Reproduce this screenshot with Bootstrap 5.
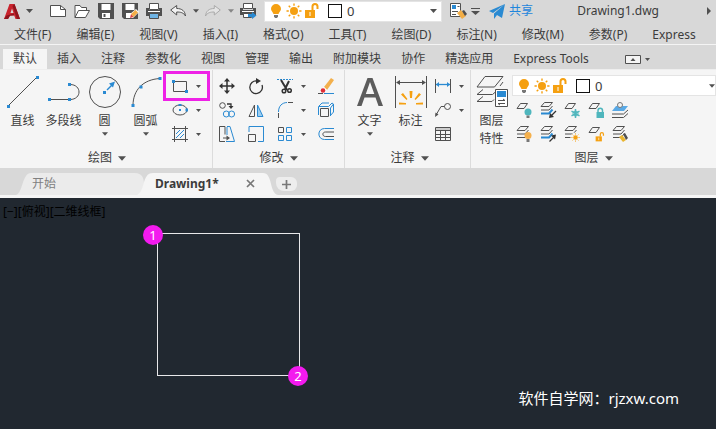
<!DOCTYPE html>
<html lang="zh-CN">
<head>
<meta charset="utf-8">
<meta name="viewport" content="width=device-width, initial-scale=1">
<title>Drawing1.dwg</title>
<link href="https://cdn.jsdelivr.net/npm/bootstrap@5.3.0/dist/css/bootstrap.min.css" rel="stylesheet">
<style>
  body { font: 12px/18px "Noto Sans", "Noto Sans CJK SC", sans-serif; color: #3c3c3c; background: #d8d8d8; }
  button, a { color: inherit; text-decoration: none; white-space: nowrap; }
  button { border: 0; padding: 0; background: none; }
  svg { display: block; flex: none; fill: none; stroke-linecap: butt; overflow: visible; }
  .k { stroke: #505050; }
  .b { stroke: #2a8ad2; }
  .kf { fill: #505050; }
  .bf { fill: #2a8ad2; }
  .of { fill: #f5a011; }
  .title-bar { height: 22px; }
  .tool { width: 24px; height: 22px; display: flex; align-items: center; justify-content: center; flex: none; }
  .first-tool { margin-left: 11px; }
  .drop { width: 11px; height: 22px; display: flex; align-items: center; justify-content: center; flex: none; }
  .combo { height: 21px; background: #fff; border: 1px solid #e4e4e4; padding-left: 2px; }
  .combo-top { width: 178px; }
  .combo-layer { margin-top: 1px; }
  .combo button { width: 18px; display: flex; justify-content: center; }
  .combo select { appearance: none; border: 0; background: none; padding: 0; font-size: 13px; line-height: 18px; color: #3c3c3c; outline: 0; min-width: 0; }
  .swatch { width: 14px; height: 14px; border: 1px solid #111; margin: 0 5px 0 7px; }
  .share { color: #1f86dc; }
  .menu-bar { height: 23px; border-bottom: 1px solid #f4f4f4; padding: 4px 0 0 14px; gap: 25px; }
  .ribbon-tabs { height: 24px; padding: 4px 0 0 3px; }
  .ribbon-tabs button { height: 20px; padding: 0 10px; }
  .ribbon-tabs .current { background: #f5f5f5; }
  .ribbon { background: #f5f5f5; height: 99px; border-top: 1px solid #eee; }
  .panel { border-right: 1px solid #dcdcdc; display: flex; flex-direction: column; padding-top: 4px; flex: none; }
  .panel-draw { width: 213px; padding-left: 2px; }
  .panel-edit { width: 132px; }
  .panel-note { width: 126px; padding-left: 4px; }
  .panel-title { display: flex; align-items: center; justify-content: center; gap: 6px; margin: auto auto 1px; height: 18px; }
  .big { width: 41px; display: flex; flex-direction: column; align-items: center; }
  .big > svg:first-child { margin-bottom: 4px; }
  .big .tri { margin-top: 2px; }
  .small-grid { display: grid; grid-auto-rows: 24px; align-items: center; justify-items: center; align-content: start; }
  .small-grid button { display: flex; }
  .grid-draw { grid-template-columns: 28px 8px; }
  .grid-edit { grid-template-columns: 28px 30px 28px 8px 37px; }
  .grid-note { grid-template-columns: 24px 12px; }
  .grid-layer { grid-template-columns: repeat(5, 24px); padding-top: 2px; }
  .marked { position: relative; }
  .marked::after { content: ""; position: absolute; inset: -7px -22px -7px -9px; border: 3px solid #ee22e6; pointer-events: none; }
  .file-tabs { height: 30px; padding: 4px 0 0 16px; border-bottom: 3px solid #f5f5f5; }
  .file-tab { position: relative; height: 23px; display: flex; align-items: center; z-index: 1; }
  .file-tab > svg.shape { position: absolute; left: 0; top: 0; width: 100%; height: 100%; z-index: -1; }
  .start-tab { width: 128px; padding-left: 16px; color: #808080; z-index: 0; }
  .drawing-tab { width: 142px; margin-left: -8px; padding: 0 23px 0 19px; justify-content: space-between; font-weight: 700; }
  .add-tab { width: 21px; height: 14px; background: #ededed; border-radius: 4px 6px 6px 8px; display: flex; align-items: center; justify-content: center; margin: 5px 0 0 -2px; }
  .drawing-area { background: #212830; position: relative; min-height: 231px; }
  .view-label { color: #000; padding: 5px 3px; }
  .rect-shape { position: absolute; left: 157px; top: 35px; width: 143px; height: 143px; border: 1px solid #e8e8ea; }
  .pin { position: absolute; width: 20px; height: 20px; border-radius: 50%; background: #f31aee; color: #fff; text-align: center; font-size: 13px; line-height: 20px; }
  .pin-start { left: -15px; top: -9px; }
  .pin-end { right: -9px; bottom: -11px; }
  .site { color: #fff; font-size: 15px; line-height: 20px; padding: 0 37px 21px 0; }
</style>
<script src="https://cdn.jsdelivr.net/npm/bootstrap@5.3.0/dist/js/bootstrap.bundle.min.js"></script>
</head>
<body class="d-flex flex-column min-vh-100 overflow-hidden">

<svg width="0" height="0" class="position-absolute" aria-hidden="true">
  <symbol id="tri" viewBox="0 0 7 4"><path class="kf" d="M0 0h7L3.500 4z"/></symbol>
  <symbol id="bulb" viewBox="0 0 14 16"><path class="of" d="M7 1a5 5 0 0 0-5 5c0 2 2 3 2.500 5h5C10 9 12 8 12 6a5 5 0 0 0-5-5z"/><path fill="#777" d="M5 12h4v1.500L8 15H6l-1-1.500z"/></symbol>
  <symbol id="sun" viewBox="0 0 16 16"><circle class="of" cx="8" cy="8" r="4"/><path stroke="#f5a011" stroke-width="1.400" d="M8 .5v2.300M8 13.200v2.300M.5 8h2.300M13.200 8h2.300M2.700 2.700l1.600 1.600M11.700 11.700l1.600 1.600M2.700 13.300l1.600-1.600M11.700 4.300l1.600-1.600"/></symbol>
  <symbol id="unlock" viewBox="0 0 16 16"><path class="of" d="M1 7h10v8H1z"/><path stroke="#f5a011" stroke-width="2" d="M8.500 7V3.500a2.500 2.500 0 0 1 5 0V6"/><path stroke="#fff" d="M6 9v4"/></symbol>
  <symbol id="sheet" viewBox="0 0 16 16"><path class="k" d="M4.500 1.500h7l-3.500 5h-7z"/></symbol>
  <symbol id="stack" viewBox="0 0 16 16"><path class="k" fill="#f5f5f5" d="M4.500.5h8l-3.500 4H1z"/><path class="k" d="M1 8h8l3.500-4M1 11.500h8L12.500 7.500"/></symbol>
  <symbol id="stackblue" viewBox="0 0 16 16"><path class="k" fill="#f5f5f5" d="M4.500.5h8l-3.500 4H1z"/><path class="k" d="M1 8h8l3.500-4"/><path class="b" stroke-width="2" d="M1 11.500h8L12.500 7.500"/></symbol>
</svg>

<header>
  <div class="title-bar d-flex align-items-center">
    <button class="tool" aria-label="应用程序菜单"><svg width="16" height="17" viewBox="0 0 16 17"><path fill="#c9232d" d="M5.500 1h5L16 16h-4.500l-1.300-3.500H6L4 16H0z"/><path fill="#d8d8d8" d="M8 5.500l1.500 4.500H6.500z"/><path fill="#8f151e" d="M10.500 1L16 16h-3L8.500 3zM0 16l2.500-3.500L10 10.500v1.700L6 12.700 4 16z"/></svg></button>
    <button class="drop" aria-label="打开菜单"><svg width="7" height="4"><use href="#tri"/></svg></button>
    <button class="tool first-tool" aria-label="新建"><svg width="16" height="16" viewBox="0 0 16 16"><path class="k" fill="#fff" d="M.5 2.500h10l5 4v7H.5z"/><path class="k" d="M10.500 2.500v4h5"/></svg></button>
    <button class="tool" aria-label="打开"><svg width="16" height="16" viewBox="0 0 16 16"><path class="k" fill="#fff" d="M1 14.500v-12h5l1.500 2h5v3M1 14.500l3.500-7h11l-4 7z"/></svg></button>
    <button class="tool" aria-label="保存"><svg width="16" height="16" viewBox="0 0 16 16"><path class="kf" d="M0 0h16v16H2l-2-2z"/><path fill="#fff" d="M3.500 1h9v6h-9zM4 10h8v5H4z"/><path class="kf" d="M5.500 11h2v3h-2z"/></svg></button>
    <button class="tool" aria-label="另存为"><svg width="16" height="16" viewBox="0 0 16 16"><path class="kf" d="M0 0h16v16H2l-2-2z"/><path fill="#fff" d="M3.500 1h9v6h-9zM4 10h6v5H4z"/><path fill="#fff" d="M7 15l1-4 6-5 3 3-6 6z"/><path fill="#f3ae46" d="M9 11l4.500-4L16 9.500 11.500 14z"/><path fill="#dc4545" d="M8 15l1-4 2.500 3z"/></svg></button>
    <button class="tool" aria-label="打印"><svg width="16" height="16" viewBox="0 0 16 16"><path class="k" fill="#fff" d="M3.500.5h9v6h-9z"/><path class="kf" d="M0 5h3v2h10V5h3v8H0z"/><path class="k" fill="#6fb4e4" d="M3.500 10.500h9v5h-9z"/><path fill="#fff" d="M2 8h12v1H2z"/></svg></button>
    <button class="tool" aria-label="放弃"><svg width="16" height="14" viewBox="0 0 16 14"><path class="k" fill="#f2f2f2" d="M.7 6l6-4.500v3C12 4.500 15 7 15.500 12c-2-3.500-5-4-8.800-4v3z"/></svg></button>
    <button class="drop" aria-label="放弃列表"><svg width="6" height="4"><use href="#tri"/></svg></button>
    <button class="tool" aria-label="重做"><svg width="16" height="14" viewBox="0 0 16 14"><path stroke="#aaa" fill="#e4e4e4" d="M15.300 6l-6-4.500v3C4 4.500 1 7 .5 12c2-3.500 5-4 8.800-4v3z"/></svg></button>
    <button class="drop" aria-label="重做列表"><svg width="6" height="4" opacity=".6"><use href="#tri"/></svg></button>
    <button class="tool" aria-label="批处理打印"><svg width="16" height="16" viewBox="0 0 16 16"><path class="k" fill="#fff" d="M3.500.5h9v5h-9z"/><path class="kf" d="M0 5h3v2h10V5h3v7H0z"/><path fill="#fff" d="M2 8h12v1H2z"/><path class="k" fill="#fff" d="M3.500 10.500h8v4h-8z"/><path class="bf" d="M8 11h4V9l4.500 3.500L12 16v-2H8z"/></svg></button>
    <div class="combo combo-top d-flex align-items-center pe-1 ms-1">
      <button aria-label="图层开关"><svg width="14" height="16"><use href="#bulb"/></svg></button>
      <button aria-label="图层冻结"><svg width="16" height="16"><use href="#sun"/></svg></button>
      <button aria-label="图层锁定"><svg width="16" height="16"><use href="#unlock"/></svg></button>
      <span class="swatch"></span>
      <select class="flex-fill" aria-label="当前图层"><option>0</option></select>
      <svg width="7" height="4"><use href="#tri"/></svg>
    </div>
    <button class="tool ms-1" aria-label="图层特性"><svg width="17" height="16" viewBox="0 0 17 16"><path class="k" fill="#fff" d="M.5.5h10v13H.5z"/><path class="bf" d="M2 2h4v4H2z"/><path class="k" d="M7.500 3.500h2M2 8.500h6M2 11.500h4"/><path fill="#f3ae46" d="M7 10l4-3 5 6-4 3z"/><path class="kf" d="M12 8l2-1 3 4-2 2z"/></svg></button>
    <button class="drop" aria-label="自定义快速访问工具栏"><svg width="9" height="7" viewBox="0 0 9 7"><path class="kf" d="M0 0h9v1H0zM0 3h9L4.500 7z"/></svg></button>
    <button class="share d-flex align-items-center ps-1 ms-1 gap-1"><svg width="16" height="15" viewBox="0 0 16 15"><path class="bf" d="M16 0L0 7l4 2zM16 0L5 9.500V15l3-4 5 3z"/></svg>共享</button>
    <span class="ms-auto">Drawing1.dwg</span>
    <button class="ms-5 me-1" aria-label="展开"><svg width="5" height="8" viewBox="0 0 5 8"><path class="kf" d="M0 0l4 4-4 4z"/></svg></button>
  </div>

  <nav class="menu-bar d-flex" aria-label="菜单栏">
    <a href="#">文件(F)</a><a href="#">编辑(E)</a><a href="#">视图(V)</a><a href="#">插入(I)</a><a href="#">格式(O)</a><a href="#">工具(T)</a><a href="#">绘图(D)</a><a href="#">标注(N)</a><a href="#">修改(M)</a><a href="#">参数(P)</a><a href="#">Express</a>
  </nav>

  <div class="ribbon-tabs d-flex">
    <button class="current">默认</button><button>插入</button><button>注释</button><button>参数化</button><button>视图</button><button>管理</button><button>输出</button><button>附加模块</button><button>协作</button><button>精选应用</button><button>Express Tools</button>
    <button class="d-flex align-items-center gap-1 ms-3" aria-label="最小化功能区"><svg width="16" height="9" viewBox="0 0 16 9"><path class="k" fill="#f4f4f4" d="M.5.5h15v8H.5z"/><path class="kf" d="M5.500 6h5L8 3z"/></svg><svg width="5" height="3"><use href="#tri"/></svg></button>
  </div>
</header>

<main class="d-flex flex-column flex-fill">
  <div class="ribbon d-flex">
    <section class="panel panel-draw">
      <div class="d-flex">
        <button class="big"><svg width="32" height="34" viewBox="0 0 32 34"><path class="k" d="M1 32L30 3"/><path class="bf" d="M0 31h3v3H0zM29 2h3v3h-3z"/></svg>直线</button>
        <button class="big"><svg width="32" height="34" viewBox="0 0 32 34"><path class="k" d="M2 25.500h20c12 0 12-15 0-15"/><path class="bf" d="M0 24h3v3H0zM20 24h3v3h-3zM20 9h3v3h-3z"/></svg>多段线</button>
        <button class="big"><svg width="32" height="34" viewBox="0 0 32 34"><circle class="k" cx="16" cy="18" r="15.500"/><path class="b" stroke-width="1.500" d="M18 16l6-6"/><path class="bf" d="M20 9.500l6-2-2 6zM14 17h3v3h-3z"/></svg>圆<svg class="tri" width="6" height="4"><use href="#tri"/></svg></button>
        <button class="big"><svg width="32" height="34" viewBox="0 0 32 34"><path class="k" d="M3 31.500C3 16 13 5.500 30 4.500"/><path class="bf" d="M1.500 30h3v3h-3zM9.500 11.500h3v3h-3zM28.500 3h3v3h-3z"/></svg>圆弧<svg class="tri" width="6" height="4"><use href="#tri"/></svg></button>
        <div class="small-grid grid-draw">
          <button class="marked" aria-label="矩形"><svg width="16" height="16" viewBox="0 0 16 16"><path class="k" d="M1.500 3.500h13v10h-13z"/><path class="bf" d="M0 2h3v3H0zM13 12h3v3h-3z"/></svg></button>
          <svg width="5" height="3"><use href="#tri"/></svg>
          <button aria-label="椭圆"><svg width="16" height="16" viewBox="0 0 16 16"><ellipse class="k" cx="8" cy="8" rx="7" ry="5"/><path class="bf" d="M6.500 2h3v2h-3zM7 7h2v2H7zM13.500 6.500h2.500v3h-2.500z"/></svg></button>
          <svg width="5" height="3"><use href="#tri"/></svg>
          <button aria-label="图案填充"><svg width="16" height="16" viewBox="0 0 16 16"><path class="k" d="M2.500 0v16M13.500 0v16M0 2.500h16M0 13.500h16"/><path class="b" d="M4 8l4-4M4 12l8-8M8 12l4-4"/></svg></button>
          <svg width="5" height="3"><use href="#tri"/></svg>
        </div>
      </div>
      <button class="panel-title">绘图<svg width="8" height="5"><use href="#tri"/></svg></button>
    </section>

    <section class="panel panel-edit">
      <div class="small-grid grid-edit">
        <button aria-label="移动"><svg width="16" height="16" viewBox="0 0 16 16"><path stroke="#333" stroke-width="1.500" d="M8 2v12M2 8h12"/><path fill="#333" d="M8 0l3 3.500H5zM8 16l3-3.500H5zM0 8l3.500-3v6zM16 8l-3.500-3v6z"/></svg></button>
        <button aria-label="旋转"><svg width="16" height="16" viewBox="0 0 16 16"><path stroke="#333" stroke-width="1.300" d="M9 3a6.300 6.300 0 1 0 5 4"/><path fill="#333" d="M8 0l5 3-5 3z"/></svg></button>
        <button aria-label="修剪"><svg width="16" height="16" viewBox="0 0 16 16"><path class="b" stroke-dasharray="2 1" d="M0 1.500h16"/><path stroke="#333" stroke-width="2" d="M4 2l6 10M12 3L8 11"/><circle stroke="#333" stroke-width="1.500" cx="7" cy="13" r="1.800"/><circle stroke="#333" stroke-width="1.500" cx="12.500" cy="12.500" r="1.800"/></svg></button>
        <svg width="5" height="3"><use href="#tri"/></svg>
        <button aria-label="删除"><svg width="16" height="16" viewBox="0 0 16 16"><path fill="#f3b04c" d="M6 9L13 0l3 2-7 10z"/><path fill="#fff" d="M5 10l1-1 3 3-1 1z"/><circle fill="#e02d35" cx="5" cy="12.500" r="2.300"/><path class="k" d="M0 15.500h5"/><path class="b" d="M6 15.500h10"/></svg></button>
        <button aria-label="复制"><svg width="16" height="16" viewBox="0 0 16 16"><circle class="k" cx="3.500" cy="3.500" r="2.800"/><path stroke="#333" stroke-width="1.300" d="M8 2h4v3"/><path fill="#333" d="M9.500 4h5L12 7z"/><circle class="b" cx="7.300" cy="12" r="3"/><circle class="b" cx="12.600" cy="12" r="3"/></svg></button>
        <button aria-label="镜像"><svg width="16" height="16" viewBox="0 0 16 16"><path class="k" d="M6.500 3v11.500H1z"/><path class="b" fill="#9bcdf0" d="M9.500 3v11.500H15z"/></svg></button>
        <button aria-label="圆角"><svg width="16" height="16" viewBox="0 0 16 16"><path class="k" d="M1.500 16v-5M11 .5h5"/><path class="b" d="M1.500 10C1.500 4 5 .7 10 .5"/></svg></button>
        <svg width="5" height="3"><use href="#tri"/></svg>
        <button aria-label="分解"><svg width="16" height="16" viewBox="0 0 16 16"><path class="k" d="M2.500 6.500h8v8h-8z"/><path class="b" d="M.5 13V4.500L4 1h7M10.500 4.500L14 1l1.500 1v8L12 14M1 4.500h9.500M12.500 6v8M12.500 6L15.500 2"/></svg></button>
        <button aria-label="拉伸"><svg width="16" height="16" viewBox="0 0 16 16"><path class="k" d="M6 15.500H.5V.5H6v8"/><path class="b" d="M8 .5h3l4.500 15H7M8 1v8"/><path class="kf" d="M4 11.500h3.500v-2L11 12l-3.500 2.500v-2H4z"/></svg></button>
        <button aria-label="缩放"><svg width="16" height="16" viewBox="0 0 16 16"><path class="b" d="M1 6V.5h14.500v15H10"/><path class="k" d="M.5 8.500h7v7h-7z"/></svg></button>
        <button aria-label="阵列"><svg width="16" height="16" viewBox="0 0 16 16"><path class="k" d="M1.500 1.500h5v5h-5z"/><path class="b" d="M9.500 1.500h5v5h-5zM1.500 9.500h5v5h-5zM9.500 9.500h5v5h-5z"/></svg></button>
        <svg width="5" height="3"><use href="#tri"/></svg>
        <button aria-label="偏移"><svg width="16" height="16" viewBox="0 0 16 16"><path class="b" d="M16 2.500H6.500c-7.500 0-7.500 11 0 11H16"/><path class="k" d="M16 6H7.500c-3.500 0-3.500 4.500 0 4.500H16"/></svg></button>
      </div>
      <button class="panel-title">修改<svg width="8" height="5"><use href="#tri"/></svg></button>
    </section>

    <section class="panel panel-note">
      <div class="d-flex">
        <button class="big"><svg width="32" height="34" viewBox="0 0 32 34"><path fill="#5c5c5c" d="M13.500 4h5L29 32h-4.500l-3-8.500h-11L7.500 32H3zM16 8l-4.200 12h8.500z"/></svg>文字<svg class="tri" width="6" height="4"><use href="#tri"/></svg></button>
        <button class="big"><svg width="32" height="34" viewBox="0 0 32 34"><path class="k" d="M.5 2v32M31.500 2v32M2 8.500h28"/><path class="kf" d="M1 8.500l4-2.500v5zM31 8.500L27 6v5z"/><path fill="#f5a011" d="M14.500 17h3l-.5 7h-2zM6 20.500l2-1.500 4.500 6-1 1zM26 20.500L24 19l-4.500 6 1 1zM4 28.500l7 .5v1.500H4zM28 28.500l-7 .5v1.500h7z"/></svg>标注</button>
        <div class="small-grid grid-note">
          <button aria-label="线性"><svg width="16" height="16" viewBox="0 0 16 16"><path class="k" d="M.5 1v14M15.500 1v14"/><path class="b" stroke-width="1.300" d="M1 6.500h14"/><path class="bf" d="M1 6.500L4 4v5zM15 6.500L12 4v5z"/></svg></button>
          <svg width="5" height="3"><use href="#tri"/></svg>
          <button aria-label="引线"><svg width="16" height="16" viewBox="0 0 16 16"><circle class="k" cx="12.500" cy="4.500" r="3"/><path class="k" d="M9.500 4.500H6L1 13"/><path class="kf" d="M0 15l.5-4.500 3 2z"/></svg></button>
          <svg width="5" height="3"><use href="#tri"/></svg>
          <button aria-label="表格"><svg width="16" height="16" viewBox="0 0 16 16"><path fill="#ccc" d="M1 2h14v2.500H1z"/><path class="k" d="M.5 1.500h15v13H.5zM.5 4.500h15M.5 8.500h15M.5 11.500h15M5.500 5v9.500M10.500 5v9.500"/></svg></button>
        </div>
      </div>
      <button class="panel-title">注释<svg width="8" height="5"><use href="#tri"/></svg></button>
    </section>

    <section class="panel flex-fill border-0">
      <div class="d-flex">
        <button class="big"><svg width="32" height="34" viewBox="0 0 32 34"><path class="k" d="M9 2.500h18L18.500 13H1zM7 15.500l-6 5h15.500l3.500-3M7 22.500l-6 5h15l2-2M24 12l3-4"/><path class="k" fill="#fff" d="M19.500 15.500h12v17h-12z"/><path class="bf" d="M21 17h9v6h-9z"/><path class="k" d="M22 26.500h7M22 29.500h7M27 25l2 1.500M24 31l-2-1.500"/></svg>图层<span>特性</span></button>
        <div class="flex-fill">
          <div class="combo combo-layer d-flex align-items-center">
            <button aria-label="图层开关"><svg width="14" height="16"><use href="#bulb"/></svg></button>
            <button aria-label="图层冻结"><svg width="16" height="16"><use href="#sun"/></svg></button>
            <button aria-label="图层锁定"><svg width="16" height="16"><use href="#unlock"/></svg></button>
            <span class="swatch"></span>
            <select class="flex-fill" aria-label="图层"><option>0</option></select>
            <svg width="6" height="4"><use href="#tri"/></svg>
          </div>
          <div class="small-grid grid-layer">
            <button aria-label="关"><svg width="16" height="16" viewBox="0 0 16 16"><use href="#sheet" width="16" height="16"/><circle fill="#4fb6bd" cx="12" cy="10" r="3.500"/><path fill="#777" d="M10.500 13.500h3V16h-3z"/></svg></button>
            <button aria-label="置为当前"><svg width="16" height="16" viewBox="0 0 16 16"><use href="#stackblue" width="16" height="16"/><path stroke="#333" stroke-width="1.300" d="M16 9l-5 5"/><path fill="#333" d="M9 16l1-5 4 4z"/></svg></button>
            <button aria-label="冻结"><svg width="16" height="16" viewBox="0 0 16 16"><use href="#sheet" width="16" height="16"/><path stroke="#4fb6bd" stroke-width="1.500" d="M11.500 7v9M7.500 9.200l8 4.600M7.500 13.800l8-4.600"/><circle stroke="#4fb6bd" cx="11.500" cy="11.500" r="2.500"/></svg></button>
            <button aria-label="锁定"><svg width="16" height="16" viewBox="0 0 16 16"><use href="#sheet" width="16" height="16"/><path fill="#4fb6bd" d="M8.500 10H16v6H8.500z"/><path stroke="#4fb6bd" stroke-width="1.500" d="M10 10V8.500a2.200 2.200 0 0 1 4.500 0V10"/></svg></button>
            <button aria-label="匹配图层"><svg width="16" height="16" viewBox="0 0 16 16"><path fill="#5aaae6" d="M4 4h12l-4 5H0z"/><circle stroke="#777" fill="#f5f5f5" cx="8" cy="3" r="2.500"/><path class="k" d="M0 12h11.500L16 8M0 15.500h11.500L16 11.500"/></svg></button>
            <button aria-label="全部打开"><svg width="16" height="16" viewBox="0 0 16 16"><use href="#stack" width="16" height="16"/><circle fill="#f5b04c" cx="12" cy="9.500" r="3.500"/><path fill="#777" d="M10.500 13h3v3h-3z"/></svg></button>
            <button aria-label="上一个"><svg width="16" height="16" viewBox="0 0 16 16"><use href="#stackblue" width="16" height="16"/><path stroke="#333" stroke-width="1.300" d="M9.500 15.500l5-5"/><path fill="#333" d="M16 8.500l-1 5-4-4z"/></svg></button>
            <button aria-label="解冻"><svg width="16" height="16" viewBox="0 0 16 16"><use href="#stack" width="16" height="16"/><circle fill="#f5f5f5" cx="11.500" cy="11.500" r="5"/><use href="#sun" x="7" y="7" width="9" height="9"/></svg></button>
            <button aria-label="解锁"><svg width="16" height="16" viewBox="0 0 16 16"><use href="#sheet" width="16" height="16"/><use href="#unlock" x="7" y="6" width="10" height="10"/></svg></button>
            <button aria-label="图层匹配"><svg width="16" height="16" viewBox="0 0 16 16"><use href="#stack" width="16" height="16"/><path fill="#e9b52f" d="M7 11l3-2 4 5-3 2z"/><path class="kf" d="M11 8l2-1 3 5-2 2z"/></svg></button>
          </div>
        </div>
      </div>
      <button class="panel-title">图层<svg width="8" height="5"><use href="#tri"/></svg></button>
    </section>
  </div>

  <div class="file-tabs d-flex">
    <button class="file-tab start-tab"><svg class="shape" viewBox="0 0 128 23" preserveAspectRatio="none"><path fill="#ebebeb" d="M0 23c7-2 6-22 15-22h104c7 0 9 5 9 11s-3 11-9 11z"/></svg>开始</button>
    <button class="file-tab drawing-tab"><svg class="shape" viewBox="0 0 142 23" preserveAspectRatio="none"><path fill="#f5f5f5" d="M0 23c10-2 5-22 17-22h110c10 0 6 20 15 22z"/></svg>Drawing1*<svg width="9" height="9" viewBox="0 0 9 9"><path stroke="#777" stroke-width="1.700" d="M1 1l7 7M8 1L1 8"/></svg></button>
    <button class="add-tab" aria-label="新图形"><svg width="9" height="9" viewBox="0 0 9 9"><path stroke="#777" stroke-width="1.700" d="M4.500 0v9M0 4.500h9"/></svg></button>
  </div>

  <div class="drawing-area flex-fill d-flex flex-column">
    <div class="view-label">[−][俯视][二维线框]</div>
    <div class="rect-shape"><span class="pin pin-start">1</span><span class="pin pin-end">2</span></div>
    <div class="site mt-auto align-self-end">软件自学网：rjzxw.com</div>
  </div>
</main>
</body>
</html>
